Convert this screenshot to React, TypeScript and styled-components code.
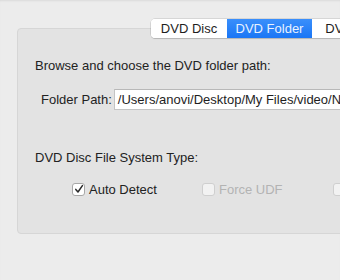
import React from "react";
import styled, { createGlobalStyle } from "styled-components";

const Global = createGlobalStyle`
  html, body { margin: 0; padding: 0; background: #ececec; }
  body { font-family: "Liberation Sans", Arial, sans-serif; font-size: 13px; color: #222222; }
`;

const Window = styled.div`
  width: 340px;
  height: 280px;
  overflow: hidden;
  background: #ececec;
  box-shadow: inset 0 2px 2px -1px rgba(0, 0, 0, 0.08);
  padding-top: 19px;
  box-sizing: border-box;
`;

const TabBar = styled.div`
  display: flex;
  margin-left: 151px;
  position: relative;
  z-index: 2;
  width: max-content;
  height: 19px;
  border-radius: 4px;
  box-shadow: 0 0 0 0.5px rgba(0, 0, 0, 0.18), 0 1px 1px rgba(0, 0, 0, 0.12);
  background: #fff;
  overflow: hidden;
`;

const Tab = styled.div<{ $active?: boolean; $w: number }>`
  width: ${(p) => p.$w}px;
  height: 19px;
  display: flex;
  align-items: center;
  justify-content: center;
  font-size: 13px;
  line-height: 19px;
  background: ${(p) => (p.$active ? "linear-gradient(#3a8ffb, #1a76f5)" : "#ffffff")};
  color: ${(p) => (p.$active ? "#e9f2ff" : "#1e1e1e")};
  white-space: nowrap;
`;

const Panel = styled.div`
  margin-top: -10px;
  margin-left: 17px;
  width: 400px;
  height: 206px;
  box-sizing: border-box;
  background: #e3e3e3;
  border: 1px solid #d6d6d6;
  border-radius: 4px;
  padding: 29px 0 0 17px;
  display: flex;
  flex-direction: column;
`;

const Label = styled.div`
  line-height: 16px;
  height: 16px;
  white-space: nowrap;
`;

const PathRow = styled.div`
  display: flex;
  align-items: center;
  margin-top: 15px;
  padding-left: 6px;
  gap: 2px;
`;

const Input = styled.div`
  height: 21px;
  flex: 1;
  box-sizing: border-box;
  background: #fff;
  border: 1px solid #c4c4c4;
  border-top-color: #b8b8b8;
  padding-left: 3px;
  line-height: 19px;
  white-space: nowrap;
  overflow: hidden;
  color: #1e1e1e;
`;

const Section = styled(Label)`
  margin-top: 40px;
`;

const CheckRow = styled.div`
  display: grid;
  grid-template-columns: 130px 131px 130px;
  margin-top: 15px;
  padding-left: 37px;
`;

const CheckItem = styled.div<{ $disabled?: boolean }>`
  display: flex;
  align-items: center;
  gap: 4px;
  height: 16px;
  color: ${(p) => (p.$disabled ? "#b3b3b3" : "#222222")};
  white-space: nowrap;
`;

const Box = styled.span<{ $disabled?: boolean }>`
  width: 13px;
  height: 13px;
  box-sizing: border-box;
  border-radius: 3px;
  background: ${(p) => (p.$disabled ? "#f2f2f2" : "#fff")};
  border: 1px solid ${(p) => (p.$disabled ? "#cfcfcf" : "#a8a8a8")};
  display: flex;
  align-items: center;
  justify-content: center;
  flex-shrink: 0;
`;

const Check = () => (
  <svg width="10" height="10" viewBox="0 0 10 10">
    <path d="M1.8 5.4 L4 8 L8.4 1.6" fill="none" stroke="#2a2a2a" strokeWidth="1.5" strokeLinecap="round" strokeLinejoin="round" />
  </svg>
);

export default function App() {
  return (
    <Window>
      <Global />
      <TabBar>
        <Tab $w={76}>DVD Disc</Tab>
        <Tab $w={85} $active>DVD Folder</Tab>
        <Tab $w={80}>DVD ISO</Tab>
      </TabBar>
      <Panel>
        <Label>Browse and choose the DVD folder path:</Label>
        <PathRow>
          <Label>Folder Path:</Label>
          <Input>/Users/anovi/Desktop/My Files/video/NTSC_DVD</Input>
        </PathRow>
        <Section>DVD Disc File System Type:</Section>
        <CheckRow>
          <CheckItem>
            <Box><Check /></Box>
            Auto Detect
          </CheckItem>
          <CheckItem $disabled>
            <Box $disabled />
            Force UDF
          </CheckItem>
          <CheckItem $disabled>
            <Box $disabled />
            Force ISO 9660
          </CheckItem>
        </CheckRow>
      </Panel>
    </Window>
  );
}
